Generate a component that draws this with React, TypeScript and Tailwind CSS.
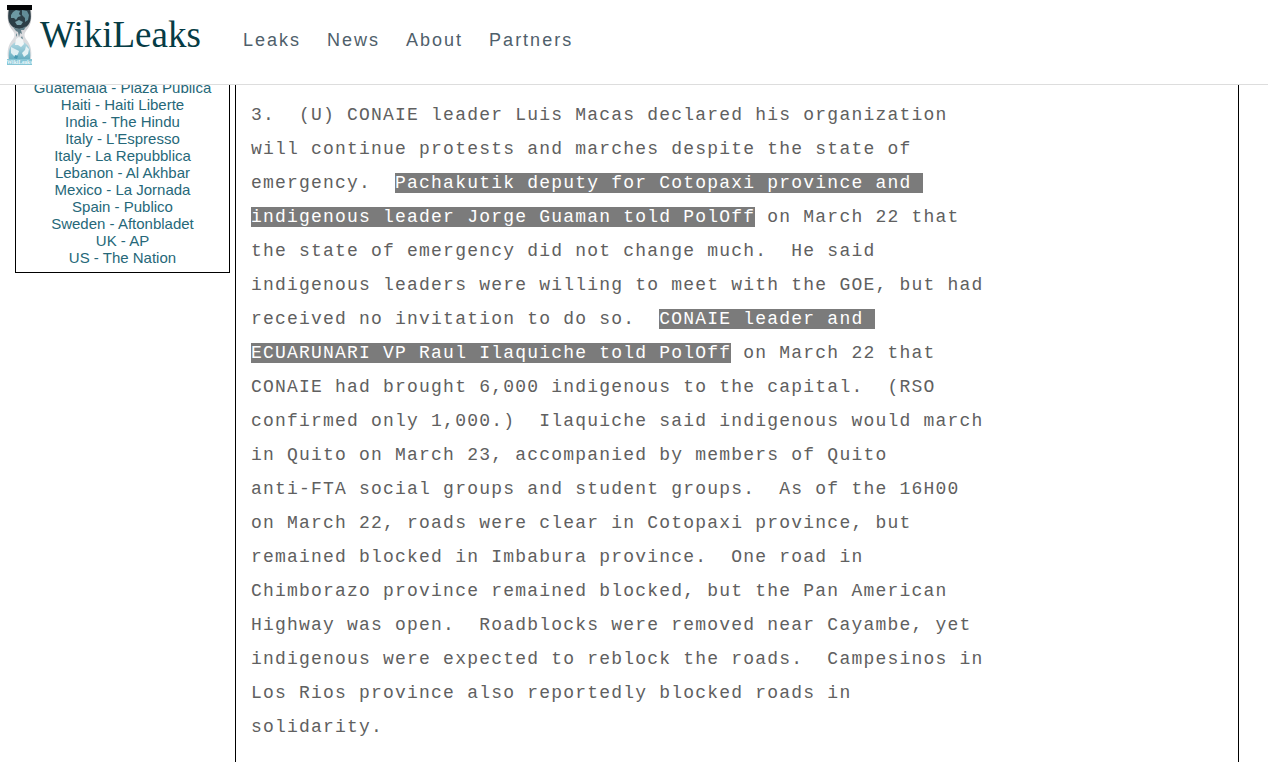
import React from "react";

const navItems = ["Leaks", "News", "About", "Partners"];

const partners = [
  "Guatemala - Plaza Publica",
  "Haiti - Haiti Liberte",
  "India - The Hindu",
  "Italy - L'Espresso",
  "Italy - La Repubblica",
  "Lebanon - Al Akhbar",
  "Mexico - La Jornada",
  "Spain - Publico",
  "Sweden - Aftonbladet",
  "UK - AP",
  "US - The Nation",
];

function HourglassLogo() {
  return (
    <svg className="h-[60px] w-[25px] shrink-0" viewBox="0 0 25 60" aria-hidden="true">
      <defs>
        <linearGradient id="glass" x1="0" y1="0" x2="0" y2="1">
          <stop offset="0" stopColor="#a7a9ac" />
          <stop offset="0.5" stopColor="#dcdcdf" />
          <stop offset="1" stopColor="#d5dade" />
        </linearGradient>
        <linearGradient id="water" x1="0" y1="0" x2="0" y2="1">
          <stop offset="0" stopColor="#b8dbe5" />
          <stop offset="1" stopColor="#69afc2" />
        </linearGradient>
      </defs>
      <path d="M1 4H24C25 15 24 20 19 26C17 29 17 31 19 34C24 40 25 46 24 54H1C0 46 1 40 6 34C8 31 8 29 6 26C1 20 0 15 1 4Z" fill="url(#glass)" />
      <rect width="25" height="5" fill="#050607" />
      <path d="M2 5H23C25 14 23 19 19 22Q12.5 26 6 22C2 19 0 14 2 5Z" fill="#2c3e46" />
      <path d="M4 10L6 7L9 5L13 6L12 9L14 11L11 12L9 15L7 13L4 13Z" fill="#6d99a3" />
      <path d="M15 5L20 6L22 10L21 15L18 17L18 13L15 10Z" fill="#628d98" />
      <path d="M8 17L12 15L16 17L14 20L10 20Z" fill="#7aa2ab" />
      <path d="M6 22Q12 26 19 21L17 25L14 25L15 29L13 28L12 32L11 27L9 26Z" fill="#5f7d87" />
      <path d="M9 28L10 30L9 32ZM15 31L16 34L14 33Z" fill="#557b87" />
      <path d="M7 38Q12.5 34 18 38C22 41 24 45 23 54H2C1 45 3 41 7 38Z" fill="url(#water)" />
      <path d="M9 34L12 32L16 35L17 39L14 42L11 40L8 40Z" fill="#f2f6f7" />
      <path d="M4 42L8 44L12 46L11 49L8 52L4 48Z" fill="#e1eff3" />
      <path d="M19 41L22 44L21 49L17 52L15 48L18 45Z" fill="#e5f2f5" />
      <path d="M8 50L11 51L10 54L7 53Z" fill="#4899b2" />
      <rect y="54" width="25" height="6" fill="#86c5d5" />
      <text x="12.5" y="59" textAnchor="middle" fontFamily="Liberation Serif, serif" fontWeight="bold" fontSize="5.5" fill="#edf9fc">WikiLeaks</text>
    </svg>
  );
}

function Mark({ children }: { children: React.ReactNode }) {
  return <mark className="bg-[#7b7b7b] text-white">{children}</mark>;
}

export default function App() {
  return (
    <div className="flex min-h-screen flex-col bg-white font-['Liberation_Sans',Arial,sans-serif]">
      <header className="relative z-10 flex h-[85px] shrink-0 items-start border-b border-[#ddd] bg-white pl-[7px] pt-[5px]">
        <a href="#home" className="flex w-[236px] gap-2 text-[#063c45]">
          <HourglassLogo />
          <span className="font-['Liberation_Serif',serif] text-[37px] leading-[60px]">WikiLeaks</span>
        </a>
        <nav className="flex gap-[26px] pt-6 text-[18px] leading-[22px] tracking-[2px] text-[#4f606b]">
          {navItems.map((item) => (
            <a key={item} href={`#${item.toLowerCase()}`}>{item}</a>
          ))}
        </nav>
      </header>

      <div className="flex flex-1 gap-[5px] pl-[15px] pr-[29px]">
        <aside className="-mt-[7px] w-[215px] shrink-0 self-start border border-black pb-[6px] text-center text-[15px] leading-[17px] text-[#266879]">
          <ul>
            {partners.map((partner) => (
              <li key={partner}>
                <a href="#partners">{partner}</a>
              </li>
            ))}
          </ul>
        </aside>

        <main className="min-w-0 flex-1 border-x border-black px-[15px] pt-[13px]">
          <pre className="font-['Liberation_Mono',monospace] text-[18px] leading-[34px] tracking-[0.067em] text-[#606060]">
            {"3.  (U) CONAIE leader Luis Macas declared his organization\nwill continue protests and marches despite the state of\nemergency.  "}
            <Mark>{"Pachakutik deputy for Cotopaxi province and "}</Mark>
            {"\n"}
            <Mark>{"indigenous leader Jorge Guaman told PolOff"}</Mark>
            {" on March 22 that\nthe state of emergency did not change much.  He said\nindigenous leaders were willing to meet with the GOE, but had\nreceived no invitation to do so.  "}
            <Mark>{"CONAIE leader and "}</Mark>
            {"\n"}
            <Mark>{"ECUARUNARI VP Raul Ilaquiche told PolOff"}</Mark>
            {" on March 22 that\nCONAIE had brought 6,000 indigenous to the capital.  (RSO\nconfirmed only 1,000.)  Ilaquiche said indigenous would march\nin Quito on March 23, accompanied by members of Quito\nanti-FTA social groups and student groups.  As of the 16H00\non March 22, roads were clear in Cotopaxi province, but\nremained blocked in Imbabura province.  One road in\nChimborazo province remained blocked, but the Pan American\nHighway was open.  Roadblocks were removed near Cayambe, yet\nindigenous were expected to reblock the roads.  Campesinos in\nLos Rios province also reportedly blocked roads in\nsolidarity."}
          </pre>
        </main>
      </div>
    </div>
  );
}
